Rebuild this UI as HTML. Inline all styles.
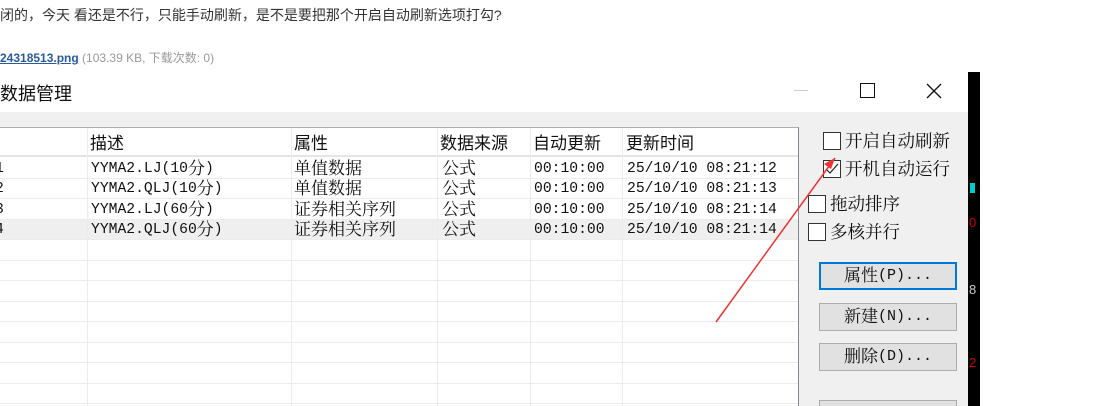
<!DOCTYPE html>
<html style="overflow:hidden;height:406px"><head><meta charset="utf-8"><style>
html,body{margin:0;overflow:hidden}
body{width:1107px;height:406px;position:relative;background:#fff;font-family:"Liberation Sans","Noto Sans CJK SC",sans-serif}
.a{position:absolute;white-space:nowrap}
.t{font-family:"Liberation Mono","Noto Serif CJK SC",monospace;font-size:14.7px;color:#111;line-height:20px}
.t b,.btn b{font-weight:normal;font-size:17px;font-family:"Noto Serif CJK SC",serif;line-height:0;vertical-align:-2px}
.h{font-size:17px;color:#111;line-height:20px}
.c{font-family:"Liberation Serif","Noto Serif CJK SC",serif;font-size:17.5px;color:#111;line-height:20px}
.cb{position:absolute;width:16px;height:16px;border:1px solid #333;background:#fff}
.btn{position:absolute;left:819px;width:136px;height:26px;border:1px solid #adadad;background:#e1e1e1;text-align:center;line-height:26px;font-family:"Liberation Mono","Noto Serif CJK SC",monospace;font-size:15px;color:#111}
</style></head><body>
<div class="a" style="left:0;top:5px;font-size:14px;color:#333">闭的，今天 看还是不行，只能手动刷新，是不是要把那个开启自动刷新选项打勾?</div>
<div class="a" style="left:0;top:49px;font-size:12px;color:#999"><span style="color:#2a5a9a;font-weight:bold;text-decoration:underline">24318513.png</span> (103.39 KB, 下载次数: 0)</div>
<div class="a" style="left:0;top:80px;font-size:18px;color:#111">数据管理</div>
<div class="a" style="left:794px;top:90px;width:14px;height:1px;background:#ccc"></div>
<div class="a" style="left:860px;top:83px;width:13px;height:13px;border:1px solid #111"></div>
<svg class="a" style="left:926px;top:83px" width="16" height="16"><path d="M1 1L15 15M15 1L1 15" stroke="#111" stroke-width="1.3"/></svg>
<div class="a" style="left:0;top:112px;width:968px;height:294px;background:#f0f0f0"></div>
<div class="a" style="left:0;top:127px;width:798px;height:279px;background:#fff;border-top:1px solid #adadad;border-right:1px solid #828790"></div>
<div class="a" style="left:0;top:155px;width:798px;height:2px;background:#e5e5e5"></div>
<div class="a" style="left:0;top:219px;width:798px;height:20px;background:#efefef"></div>
<svg class="a" style="left:0;top:128px" width="798" height="278">
<g stroke="#ececec" stroke-width="1">
<line x1="0" y1="50.5" x2="798" y2="50.5"/><line x1="0" y1="70.5" x2="798" y2="70.5"/><line x1="0" y1="91.5" x2="798" y2="91.5"/><line x1="0" y1="111.5" x2="798" y2="111.5"/><line x1="0" y1="132.5" x2="798" y2="132.5"/><line x1="0" y1="152.5" x2="798" y2="152.5"/><line x1="0" y1="173.5" x2="798" y2="173.5"/><line x1="0" y1="193.5" x2="798" y2="193.5"/><line x1="0" y1="214.5" x2="798" y2="214.5"/><line x1="0" y1="234.5" x2="798" y2="234.5"/><line x1="0" y1="255.5" x2="798" y2="255.5"/><line x1="0" y1="275.5" x2="798" y2="275.5"/>
<line x1="87.5" y1="0" x2="87.5" y2="278"/><line x1="291.5" y1="0" x2="291.5" y2="278"/><line x1="437.5" y1="0" x2="437.5" y2="278"/><line x1="530.5" y1="0" x2="530.5" y2="278"/><line x1="622.5" y1="0" x2="622.5" y2="278"/>
</g></svg>
<div class="a h" style="left:90px;top:134px">描述</div>
<div class="a h" style="left:294px;top:134px">属性</div>
<div class="a h" style="left:440px;top:134px">数据来源</div>
<div class="a h" style="left:533px;top:134px">自动更新</div>
<div class="a h" style="left:626px;top:134px">更新时间</div>
<div class="a t" style="left:-5px;top:159px">1</div><div class="a t" style="left:-5px;top:179px">2</div><div class="a t" style="left:-5px;top:200px">3</div><div class="a t" style="left:-5px;top:220px">4</div>
<div class="a t" style="left:91px;top:159px">YYMA2.LJ(10<b>分</b>)</div><div class="a t" style="left:91px;top:179px">YYMA2.QLJ(10<b>分</b>)</div><div class="a t" style="left:91px;top:200px">YYMA2.LJ(60<b>分</b>)</div><div class="a t" style="left:91px;top:220px">YYMA2.QLJ(60<b>分</b>)</div>
<div class="a t" style="left:294px;top:159px"><b>单值数据</b></div><div class="a t" style="left:294px;top:179px"><b>单值数据</b></div><div class="a t" style="left:294px;top:200px"><b>证券相关序列</b></div><div class="a t" style="left:294px;top:220px"><b>证券相关序列</b></div>
<div class="a t" style="left:442px;top:159px"><b>公式</b></div><div class="a t" style="left:442px;top:179px"><b>公式</b></div><div class="a t" style="left:442px;top:200px"><b>公式</b></div><div class="a t" style="left:442px;top:220px"><b>公式</b></div>
<div class="a t" style="left:534px;top:159px">00:10:00</div><div class="a t" style="left:534px;top:179px">00:10:00</div><div class="a t" style="left:534px;top:200px">00:10:00</div><div class="a t" style="left:534px;top:220px">00:10:00</div>
<div class="a t" style="left:627px;top:159px">25/10/10 08:21:12</div><div class="a t" style="left:627px;top:179px">25/10/10 08:21:13</div><div class="a t" style="left:627px;top:200px">25/10/10 08:21:14</div><div class="a t" style="left:627px;top:220px">25/10/10 08:21:14</div>
<div class="cb" style="left:823px;top:132px"></div><div class="a c" style="left:845px;top:131px">开启自动刷新</div>
<div class="cb" style="left:823px;top:160px"></div>
<svg class="a" style="left:825px;top:162px" width="14" height="14"><path d="M1 7L5 11L13 2" stroke="#222" fill="none" stroke-width="1.2"/></svg>
<div class="a c" style="left:845px;top:159px">开机自动运行</div>
<div class="cb" style="left:808px;top:195px"></div><div class="a c" style="left:830px;top:194px">拖动排序</div>
<div class="cb" style="left:808px;top:223px"></div><div class="a c" style="left:830px;top:222px">多核并行</div>
<div class="btn" style="top:262px;border:2px solid #0078d7;width:134px;height:24px;line-height:24px"><b>属性</b>(P)...</div>
<div class="btn" style="top:303px"><b>新建</b>(N)...</div>
<div class="btn" style="top:343px"><b>删除</b>(D)...</div>
<div class="btn" style="top:400px;height:5px"></div>
<div class="a" style="left:968px;top:72px;width:12px;height:334px;background:#000"></div>
<div class="a" style="left:970px;top:183px;width:5px;height:10px;background:#0cc"></div>
<div class="a" style="left:969px;top:215px;color:#c00;font-size:13px">0</div>
<div class="a" style="left:969px;top:282px;color:#ccc;font-size:13px">8</div>
<div class="a" style="left:969px;top:355px;color:#c00;font-size:13px">2</div>
<svg class="a" style="left:700px;top:150px" width="150" height="180"><path d="M16 172L135 8" stroke="#e33" stroke-width="1.5"/><path d="M135 8L124 14L131 19Z" fill="#e33"/></svg>
</body></html>
